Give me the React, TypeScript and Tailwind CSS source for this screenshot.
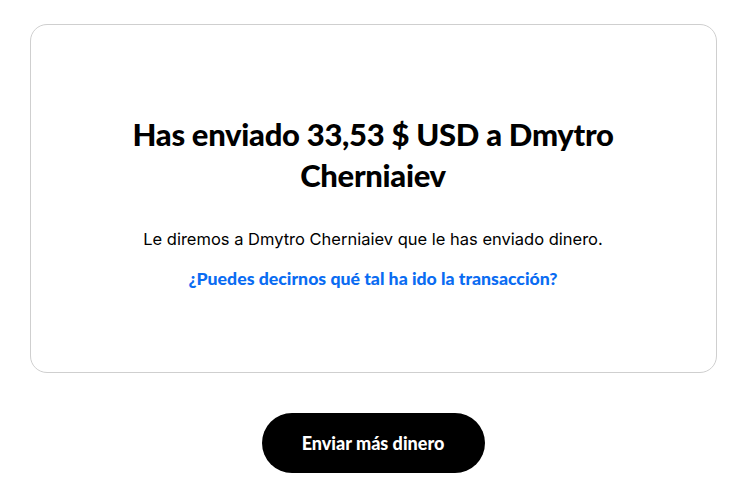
import React from "react";

export default function App() {
  return (
    <div className="w-[742px] h-[484px] bg-white flex flex-col items-center pl-[4px]" style={{ fontFamily: "Lato, 'Liberation Sans', sans-serif" }}>
      <div className="mt-[24px] w-[687px] h-[349px] rounded-[17px] border border-[#cfcfcf] flex flex-col items-center pt-[89px]">
        <h1 className="text-[31px] leading-[41px] font-black text-black text-center w-[520px] tracking-[-0.3px]">
          Has enviado 33,53 $ USD a Dmytro Cherniaiev
        </h1>
        <p className="mt-[31px] text-[16.5px] leading-[24px] text-black text-center" style={{ fontFamily: "Inter, sans-serif" }}>
          Le diremos a Dmytro Cherniaiev que le has enviado dinero.
        </p>
        <a className="mt-[16px] text-[17.7px] leading-[24px] font-black text-[#0a6cf2] text-center">
          ¿Puedes decirnos qué tal ha ido la transacción?
        </a>
      </div>
      <button className="mt-[40px] w-[223px] h-[60px] rounded-full bg-black text-white text-[18px] font-black">
        Enviar más dinero
      </button>
    </div>
  );
}
